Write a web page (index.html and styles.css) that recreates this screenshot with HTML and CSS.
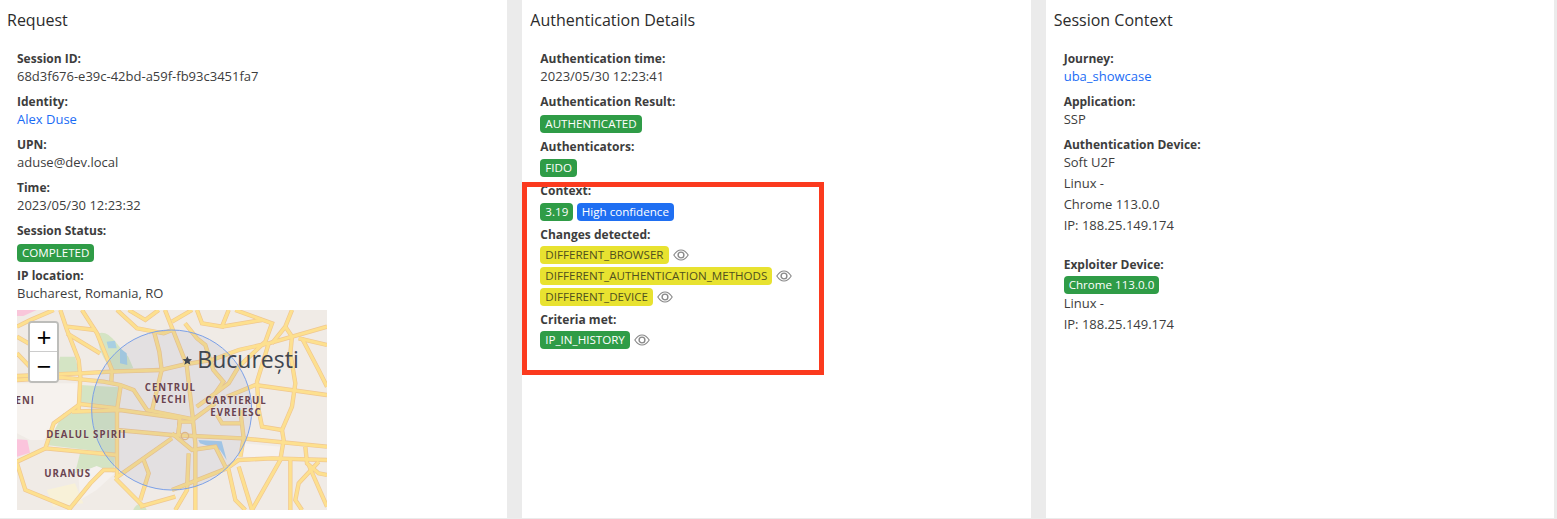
FILE: index.html
```html
<!DOCTYPE html>
<html lang="en">
<head>
    <meta charset="UTF-8">
    <title>Session details</title>
    <link rel="stylesheet" href="styles.css">
</head>
<body>
    <svg class="defs" width="0" height="0">
        <symbol id="eye" viewBox="0 0 16 12">
            <path d="M.8 6C3 2.600 5.300 1 8 1S13 2.600 15.200 6C13 9.400 10.700 11 8 11S3 9.400 .8 6Z" fill="none" stroke="#888" stroke-width="1.100"/>
            <circle cx="8" cy="6" r="2.900" fill="none" stroke="#888" stroke-width="1.400"/>
        </symbol>
    </svg>

    <div class="columns">
        <section class="card">
            <h2 class="card-title">Request</h2>
            <div class="card-body">
                <div class="field">
                    <p class="label">Session ID:</p>
                    <p class="value">68d3f676-e39c-42bd-a59f-fb93c3451fa7</p>
                </div>
                <div class="field">
                    <p class="label">Identity:</p>
                    <p class="value"><a href="#">Alex Duse</a></p>
                </div>
                <div class="field">
                    <p class="label">UPN:</p>
                    <p class="value">aduse@dev.local</p>
                </div>
                <div class="field">
                    <p class="label">Time:</p>
                    <p class="value">2023/05/30 12:23:32</p>
                </div>
                <div class="field">
                    <p class="label">Session Status:</p>
                    <div class="badges"><span class="badge green">COMPLETED</span></div>
                </div>
                <div class="field">
                    <p class="label">IP location:</p>
                    <p class="value">Bucharest, Romania, RO</p>
                </div>
                <div class="map">
                    <svg class="map-art" viewBox="51 30 930 600" width="310" height="200">
                        <rect x="51" y="30" width="930" height="600" fill="#f0ebe6"/>
                        <!-- land use -->
                        <path d="M51 30H110L70 48H51Z" fill="#f9c6da"/>
                        <path d="M51 418L82 420L90 458L51 470Z" fill="#fbc4dc"/>
                        <path d="M51 250H235L230 340L130 420L90 420L51 400Z" fill="#f6f2ee"/>
                        <path d="M240 255L358 262L352 320L240 312Z" fill="#d4e4c4"/>
                        <path d="M190 340L352 325L345 460L140 435Z" fill="#d4e4c4"/>
                        <path d="M240 460L345 470L340 520L290 500L225 520Z" fill="#d4e4c4"/>
                        <path d="M180 170H225L240 225L170 220Z" fill="#d4e4c4"/>
                        <path d="M295 100C330 90 345 130 385 170L400 205L340 215C310 180 290 140 295 100Z" fill="#d4e4c4"/>
                        <path d="M320 125L345 122L350 145L325 145ZM360 145L380 160L382 195L360 190Z" fill="#a8cfe2"/>
                        <path d="M140 570L225 550L250 610L160 620Z" fill="#f8f1d8"/>
                        <path d="M730 430L840 440L835 472L730 470Z" fill="#f6f1ee"/>
                        <path d="M235 520L290 498L345 520L290 570L240 600Z" fill="#f5f1ee"/>
                        <path d="M595 420L665 424L680 480L660 450L600 430Z" fill="#a8cdea"/>
                        <path d="M400 630C405 612 430 600 440 630Z" fill="#d4e4c4"/>
                        <!-- roads, drawn twice for the casing -->
                        <g class="roads">
                            <g id="road-net">
                                <path d="M51 80L91 60L161 30"/>
                                <path d="M181 30L201 90L236 180L241 230L236 330"/>
                                <path d="M246 30L291 100L336 210L334 245"/>
                                <path d="M201 80L286 90"/>
                                <path d="M201 100L300 160"/>
                                <path d="M51 110L120 150L150 200"/>
                                <path d="M51 160L110 222"/>
                                <path d="M351 30L411 85L491 100L516 90"/>
                                <path d="M386 30L436 60L476 30"/>
                                <path d="M516 65L576 30"/>
                                <path d="M51 228L241 220L331 215L481 210L560 192L636 180L716 150L806 130L981 80"/>
                                <path d="M51 240L181 232L311 245L361 255L401 270L441 330L580 358L646 310"/>
                                <path d="M495 30L560 195L578 350L586 430L586 630"/>
                                <path d="M462 95L478 155L485 210L455 335"/>
                                <path d="M555 70L591 115L616 135L640 210L670 245L646 280"/>
                                <path d="M591 30L606 70L666 80L686 30"/>
                                <path d="M666 80L786 60"/>
                                <path d="M706 30L816 70L796 125L716 200L686 250L646 280L590 320"/>
                                <path d="M876 30L856 80L816 130"/>
                                <path d="M856 80L876 110L871 160L886 250L876 320L846 390"/>
                                <path d="M896 115L981 135"/>
                                <path d="M906 115L956 210L981 260"/>
                                <path d="M806 130L771 245L776 330L786 380L846 390L851 420L841 480L756 630"/>
                                <path d="M681 290L766 255L981 285"/>
                                <path d="M362 258L351 330L351 530"/>
                                <path d="M351 325L240 312L216 330L161 370L136 445L51 485"/>
                                <path d="M216 335L360 330L540 355L535 405"/>
                                <path d="M351 390L516 405L726 415L981 440"/>
                                <path d="M136 445L351 465"/>
                                <path d="M51 490L76 570L211 625"/>
                                <path d="M206 630L271 550L311 510L346 510"/>
                                <path d="M346 535L431 620"/>
                                <path d="M346 535L516 415"/>
                                <path d="M431 480L446 520L421 600"/>
                                <path d="M420 620L526 590"/>
                                <path d="M516 570L681 505L716 480L816 475L981 480"/>
                                <path d="M566 460L561 570L526 630"/>
                                <path d="M516 400L576 450L646 440L676 500L686 510L706 600L736 630"/>
                                <path d="M716 500L756 630"/>
                                <path d="M871 475L871 630"/>
                                <path d="M916 440L921 490L956 520L981 525"/>
                                <path d="M956 485L896 550L886 600L906 630"/>
                                <path d="M926 495L981 620"/>
                                <path d="M721 330L731 415L721 470"/>
                                <path d="M651 345L666 370L721 370"/>
                                <path d="M540 355L535 405M580 365L535 365"/>
                            </g>
                        </g>
                        <g class="roads-fill"><use href="#road-net"/></g>
                        <circle cx="555" cy="408" r="11" fill="none" stroke="#e9bd84" stroke-width="4"/>
                        <!-- accuracy circle -->
                        <circle cx="515" cy="330" r="240" fill="#3a4fa8" fill-opacity=".07" stroke="#7ba0e8" stroke-width="3"/>
                        <!-- labels -->
                        <path d="M562 168l4 9 10 1-7.500 6.500 2.500 9.500-9-5-9 5 2.500-9.500-7.500-6.500 10-1z" fill="#3f4550"/>
                        <text class="city" x="592" y="205">București</text>
                        <text class="area" x="511" y="272" text-anchor="middle">CENTRUL</text>
                        <text class="area" x="511" y="308" text-anchor="middle">VECHI</text>
                        <text class="area" x="708" y="312" text-anchor="middle">CARTIERUL</text>
                        <text class="area" x="708" y="349" text-anchor="middle">EVREIESC</text>
                        <text class="area" x="259" y="413" text-anchor="middle">DEALUL SPIRII</text>
                        <text class="area" x="203" y="530" text-anchor="middle">URANUS</text>
                        <text class="area" x="76" y="312" text-anchor="middle">ENI</text>
                    </svg>
                    <div class="zoom-ctl">
                        <button class="zoom-btn">+</button>
                        <button class="zoom-btn">−</button>
                    </div>
                </div>
            </div>
        </section>

        <section class="card">
            <h2 class="card-title">Authentication Details</h2>
            <div class="card-body">
                <div class="field">
                    <p class="label">Authentication time:</p>
                    <p class="value">2023/05/30 12:23:41</p>
                </div>
                <div class="field">
                    <p class="label">Authentication Result:</p>
                    <div class="badges"><span class="badge green">AUTHENTICATED</span></div>
                </div>
                <div class="field">
                    <p class="label">Authenticators:</p>
                    <div class="badges"><span class="badge green">FIDO</span></div>
                </div>
                <div class="field">
                    <p class="label">Context:</p>
                    <div class="badges tight"><span class="badge green">3.19</span><span class="badge blue">High confidence</span></div>
                </div>
                <div class="field">
                    <p class="label">Changes detected:</p>
                    <div class="badge-list">
                        <div class="badge-line"><span class="badge yellow">DIFFERENT_BROWSER</span><svg class="eye"><use href="#eye"/></svg></div>
                        <div class="badge-line"><span class="badge yellow">DIFFERENT_AUTHENTICATION_METHODS</span><svg class="eye"><use href="#eye"/></svg></div>
                        <div class="badge-line"><span class="badge yellow">DIFFERENT_DEVICE</span><svg class="eye"><use href="#eye"/></svg></div>
                    </div>
                </div>
                <div class="field">
                    <p class="label">Criteria met:</p>
                    <div class="badge-list">
                        <div class="badge-line"><span class="badge green">IP_IN_HISTORY</span><svg class="eye"><use href="#eye"/></svg></div>
                    </div>
                </div>
            </div>
        </section>

        <section class="card">
            <h2 class="card-title">Session Context</h2>
            <div class="card-body">
                <div class="field">
                    <p class="label">Journey:</p>
                    <p class="value"><a href="#">uba_showcase</a></p>
                </div>
                <div class="field">
                    <p class="label">Application:</p>
                    <p class="value">SSP</p>
                </div>
                <div class="field device">
                    <p class="label">Authentication Device:</p>
                    <p class="value">Soft U2F</p>
                    <p class="value">Linux -</p>
                    <p class="value">Chrome 113.0.0</p>
                    <p class="value">IP: 188.25.149.174</p>
                </div>
                <div class="field device">
                    <p class="label">Exploiter Device:</p>
                    <div class="badges"><span class="badge green">Chrome 113.0.0</span></div>
                    <p class="value">Linux -</p>
                    <p class="value">IP: 188.25.149.174</p>
                </div>
            </div>
        </section>
    </div>

    <div class="highlight"></div>
</body>
</html>
```

FILE: styles.css
```css
body {
    margin: 0;
    height: 519px;
    overflow: hidden;
    background-color: #ebebeb;
    color: #3d3d3d;
    font-family: "Open Sans", sans-serif;
    font-size: 13px;
    line-height: 17px;
}
p {
    margin: 0;
}
a {
    color: #1a6cf5;
    text-decoration: none;
}
.defs {
    position: absolute;
}
.columns {
    display: grid;
    grid-template-columns: repeat(3, 1fr);
    gap: 15px;
    height: 518px;
    margin-left: -1px;
    margin-right: 3px;
}
.card {
    background: white;
    overflow: hidden;
}
.card-title {
    margin: 0;
    padding: 10px 8px 0;
    font-size: 16px;
    font-weight: 400;
    line-height: 20px;
    color: #2b2b2b;
}
.card-body {
    padding: 21px 18px 0;
}
.field {
    margin-bottom: 9px;
}
.label {
    padding-bottom: 1px;
    font-size: 12px;
    font-weight: 700;
    line-height: 16px;
}
.badges {
    display: flex;
    gap: 3.500px;
    margin-top: 3.500px;
    margin-bottom: -3px;
}
.badges.tight {
    margin-top: 2.500px;
}
.badge {
    display: inline-block;
    height: 18px;
    padding: 0 5px;
    border-radius: 4px;
    font-size: 11.600px;
    line-height: 18px;
    white-space: nowrap;
}
.green {
    background: #2f9c47;
    color: white;
}
.blue {
    background: #1f6ff2;
    color: white;
}
.yellow {
    background: #e8e230;
    color: #50501e;
}
.badge-list {
    display: flex;
    flex-direction: column;
    gap: 3px;
    margin-top: 2px;
    margin-bottom: -3px;
}
.badge-line {
    display: flex;
    align-items: center;
    gap: 4px;
}
.eye {
    width: 16px;
    height: 12px;
}
.device .value {
    margin-bottom: 4px;
}
.device .value:last-child {
    margin-bottom: 0;
}
.device:last-child .badges {
    margin-top: 1.500px;
    margin-bottom: 1.500px;
}
.device {
    margin-bottom: 23px;
}
.map {
    position: relative;
    width: 310px;
    height: 200px;
    margin-top: -1px;
}
.map-art {
    display: block;
}
.roads {
    fill: none;
    stroke: #f0c78f;
    stroke-width: 13;
}
.roads-fill {
    fill: none;
    stroke: #fde08f;
    stroke-width: 9;
}
.city {
    font-size: 69px;
    fill: #3f4550;
}
.area {
    font-size: 29px;
    font-weight: 700;
    letter-spacing: 3px;
    fill: #6a4450;
    stroke: #f4efea;
    stroke-width: 1;
    paint-order: stroke;
}
.zoom-ctl {
    position: absolute;
    left: 11px;
    top: 11px;
    display: flex;
    flex-direction: column;
    width: 27px;
    border: 2px solid #bdbdba;
    border-radius: 4px;
    background: white;
    overflow: hidden;
}
.zoom-btn {
    height: 29px;
    padding: 0 0 0 1px;
    border: none;
    border-bottom: 1px solid #ccc;
    background: white;
    color: black;
    font-family: "Liberation Sans", sans-serif;
    font-size: 25px;
    font-weight: 400;
    line-height: 28px;
}
.zoom-btn:last-child {
    border-bottom: none;
}
.highlight {
    position: absolute;
    left: 522px;
    top: 182px;
    width: 292px;
    height: 183px;
    border: 5px solid #fb3a1e;
}
```
